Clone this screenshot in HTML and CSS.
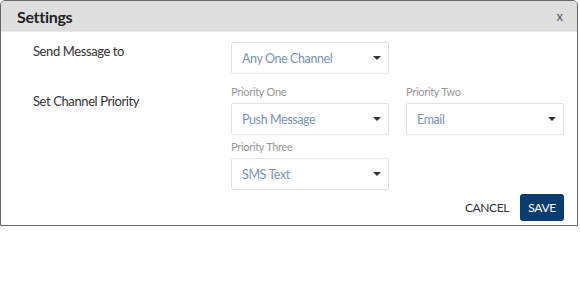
FILE: index.html
```html
<!DOCTYPE html>
<html lang="en">
<head>
  <meta charset="UTF-8">
  <title>Settings</title>
  <link rel="stylesheet" href="styles.css">
</head>
<body>
  <div class="dialog">
    <div class="dialog-header">
      <div class="dialog-title">Settings</div>
      <button class="close-btn">x</button>
    </div>
    <div class="dialog-body">
      <div class="row">
        <div class="row-label">Send Message to</div>
        <div class="fields">
          <div class="select"><span>Any One Channel</span><i class="caret"></i></div>
        </div>
      </div>
      <div class="row row-priority">
        <div class="row-label">Set Channel Priority</div>
        <div class="fields">
          <div class="field">
            <div class="field-label">Priority One</div>
            <div class="select"><span>Push Message</span><i class="caret"></i></div>
          </div>
          <div class="field">
            <div class="field-label">Priority Two</div>
            <div class="select"><span>Email</span><i class="caret"></i></div>
          </div>
          <div class="field">
            <div class="field-label">Priority Three</div>
            <div class="select"><span>SMS Text</span><i class="caret"></i></div>
          </div>
        </div>
      </div>
      <div class="actions">
        <button class="btn-cancel">CANCEL</button>
        <button class="btn-save">SAVE</button>
      </div>
    </div>
  </div>
</body>
</html>
```

FILE: styles.css
```css
body {
  margin: 0;
  background-color: #fff;
  color: #333;
  font-family: 'Lato', 'Open Sans', sans-serif;
}

.dialog {
  width: 578px;
  box-sizing: border-box;
  border: 1px solid #666;
  border-radius: 5px 5px 0 0;
  overflow: hidden;
}

.dialog-header {
  display: flex;
  justify-content: space-between;
  align-items: center;
  height: 30px;
  padding: 0 14px 0 16px;
  background-color: #dedede;
  border-bottom: 1px solid #eaeaea;
}

.dialog-title {
  font-size: 16px;
  font-weight: bold;
  color: #222;
  letter-spacing: -0.3px;
}

.close-btn {
  background: none;
  border: none;
  padding: 0;
  font-family: inherit;
  font-size: 13px;
  color: #555;
  cursor: pointer;
}

.dialog-body {
  padding: 10px 13px 4px 32px;
}

.row {
  display: flex;
}

.row-label {
  width: 198px;
  font-size: 13px;
  letter-spacing: -0.4px;
  padding-top: 1px;
}

.row-priority {
  margin-top: 11px;
}

.row-priority .row-label {
  padding-top: 8px;
}

.fields {
  display: grid;
  grid-template-columns: 158px 158px;
  column-gap: 17px;
  row-gap: 5px;
}

.field-label {
  font-size: 11px;
  letter-spacing: -0.3px;
  color: #999;
  height: 18px;
}

.select {
  display: flex;
  align-items: center;
  justify-content: space-between;
  height: 32px;
  box-sizing: border-box;
  padding: 0 7px 0 10px;
  border: 1px solid #e3e3e3;
  border-radius: 2px;
  font-size: 12.5px;
  letter-spacing: -0.4px;
  color: #7b93b5;
}

.caret {
  width: 0;
  height: 0;
  border-left: 4px solid transparent;
  border-right: 4px solid transparent;
  border-top: 4px solid #333;
}

.actions {
  display: flex;
  justify-content: flex-end;
  align-items: center;
  gap: 11px;
  margin-top: 4px;
}

.btn-cancel {
  background: none;
  border: none;
  padding: 0;
  font-family: inherit;
  font-size: 12px;
  letter-spacing: -0.4px;
  color: #333;
  cursor: pointer;
}

.btn-save {
  background-color: #0b3c6f;
  color: #fff;
  border: none;
  height: 27px;
  width: 44px;
  padding: 0;
  border-radius: 3px;
  font-family: inherit;
  font-size: 12px;
  letter-spacing: -0.3px;
  cursor: pointer;
}
```
